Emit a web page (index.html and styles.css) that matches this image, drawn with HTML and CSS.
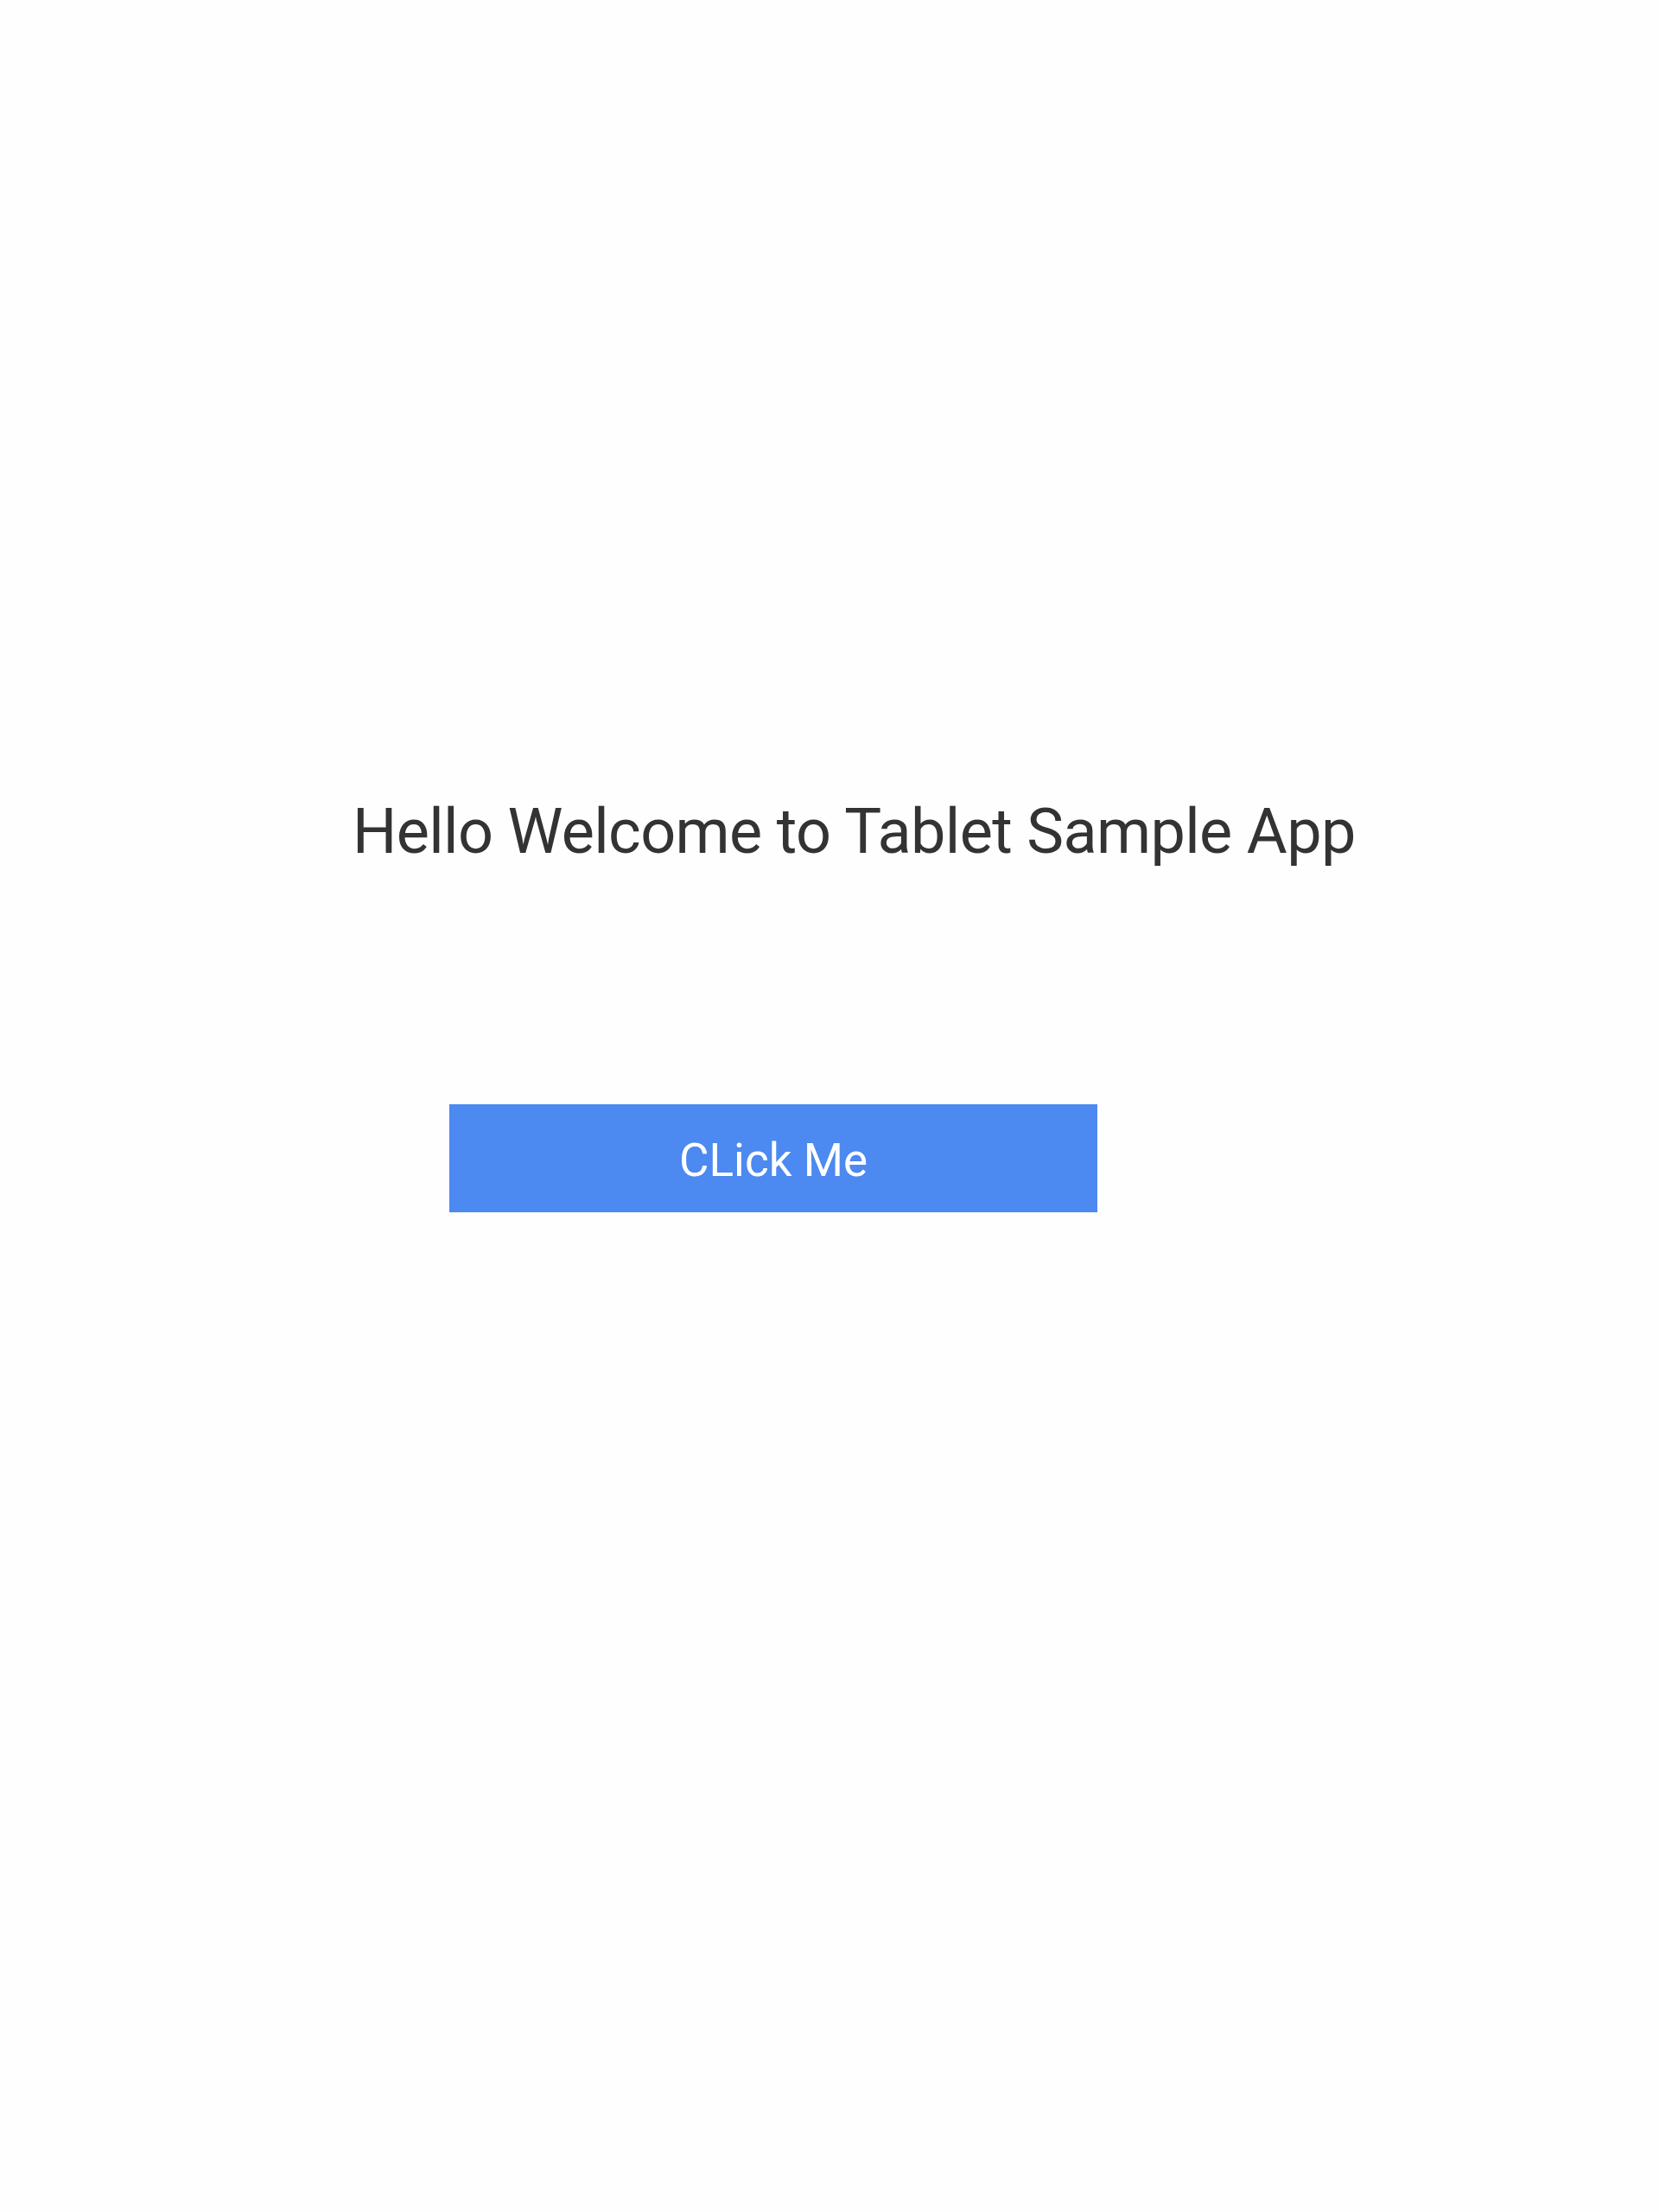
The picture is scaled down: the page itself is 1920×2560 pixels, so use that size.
FILE: index.html
```html
<!DOCTYPE html>
<html>
<head>
<meta charset="utf-8">
<link rel="stylesheet" href="styles.css">
</head>
<body>
<main class="screen">
  <h1 class="title">Hello Welcome to Tablet Sample App</h1>
  <button class="btn">CLick Me</button>
</main>
</body>
</html>
```
FILE: styles.css
```css
html, body {
  margin: 0;
  padding: 0;
  background: #fefefe;
}
.screen {
  width: 1920px;
  height: 2560px;
  display: flex;
  flex-direction: column;
  align-items: flex-start;
  padding-top: 927px;
  box-sizing: border-box;
  font-family: Roboto, "Liberation Sans", sans-serif;
}
.title {
  margin: 0 0 0 408px;
  font-size: 72px;
  letter-spacing: -0.65px;
  line-height: 1;
  font-weight: 400;
  color: #333333;
}
.btn {
  margin: 279px 0 0 520px;
  width: 750px;
  height: 125px;
  border: none;
  border-radius: 0;
  background: #4c89f1;
  color: #ffffff;
  font-family: Roboto, "Liberation Sans", sans-serif;
  font-size: 53px;
  font-weight: 400;
  padding: 5px 0 0 0;
  box-sizing: border-box;
  display: flex;
  align-items: center;
  justify-content: center;
}
```
